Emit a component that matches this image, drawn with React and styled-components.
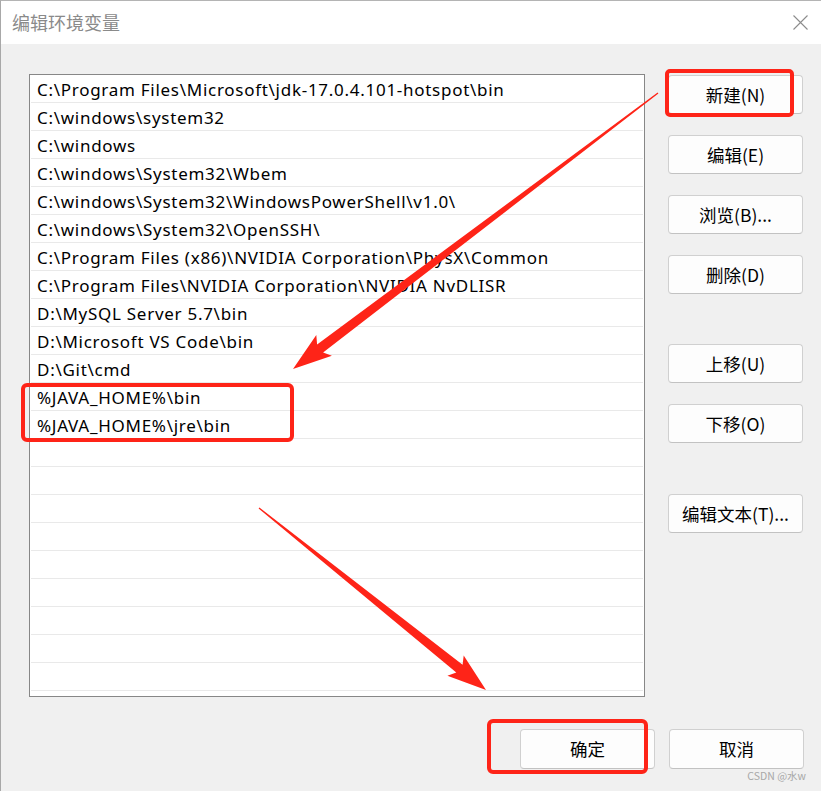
import React from 'react'
import styled, { createGlobalStyle } from 'styled-components'

const GlobalStyle = createGlobalStyle`
  html, body {
    margin: 0;
    padding: 0;
    background: #f0f0f0;
  }
`

const paths = [
  'C:\\Program Files\\Microsoft\\jdk-17.0.4.101-hotspot\\bin',
  'C:\\windows\\system32',
  'C:\\windows',
  'C:\\windows\\System32\\Wbem',
  'C:\\windows\\System32\\WindowsPowerShell\\v1.0\\',
  'C:\\windows\\System32\\OpenSSH\\',
  'C:\\Program Files (x86)\\NVIDIA Corporation\\PhysX\\Common',
  'C:\\Program Files\\NVIDIA Corporation\\NVIDIA NvDLISR',
  'D:\\MySQL Server 5.7\\bin',
  'D:\\Microsoft VS Code\\bin',
  'D:\\Git\\cmd',
  '%JAVA_HOME%\\bin',
  '%JAVA_HOME%\\jre\\bin',
]

const TOTAL_ROWS = 22

const sideButtons = [
  { label: '新建(N)', space: 1 },
  { label: '编辑(E)', space: 21 },
  { label: '浏览(B)...', space: 21 },
  { label: '删除(D)', space: 21 },
  { label: '上移(U)', space: 50 },
  { label: '下移(O)', space: 21 },
  { label: '编辑文本(T)...', space: 51 },
]

const Window = styled.div`
  position: relative;
  width: 821px;
  height: 791px;
  box-sizing: border-box;
  display: flex;
  flex-direction: column;
  background: #f0f0f0;
  border-top: 1px solid #b4b4b4;
  border-left: 1px solid #a8a8a8;
  overflow: hidden;
  font-family: "Noto Sans", "Noto Sans CJK SC", sans-serif;
`

const TitleBar = styled.div`
  height: 43px;
  flex: none;
  display: flex;
  align-items: center;
  justify-content: space-between;
  padding: 0 12px 0 11px;
  background: #ffffff;
`

const Title = styled.span`
  font-family: "Noto Sans CJK SC", sans-serif;
  font-size: 18px;
  color: #8a8a8a;
  padding-bottom: 2px;
`

const CloseIcon = styled.svg`
  width: 15px;
  height: 15px;
  margin-right: 1px;
`

const Body = styled.div`
  display: flex;
  gap: 23px;
  padding: 30px 0 0 28px;
`

const ListBox = styled.div`
  width: 616px;
  height: 623px;
  box-sizing: border-box;
  flex: none;
  border: 1px solid #878787;
  background: #ffffff;
  overflow: hidden;
`

const Row = styled.div`
  height: 28px;
  box-sizing: border-box;
  margin: 0 1px;
  padding: 2px 0 0 6px;
  display: flex;
  align-items: center;
  border-bottom: 1px solid #e9e9e9;
  font-size: 17px;
  letter-spacing: 0.72px;
  color: #000;
  white-space: nowrap;
`

const ButtonColumn = styled.div`
  display: flex;
  flex-direction: column;
`

const Button = styled.button`
  width: 135px;
  height: ${p => p.$tall ? 40 : 39}px;
  margin-top: ${p => p.$space || 0}px;
  box-sizing: border-box;
  border: 1px solid #d0d0d0;
  border-bottom-color: #c2c2c2;
  border-radius: 4px;
  background: #fdfdfd;
  font-family: "Noto Sans CJK SC", sans-serif;
  font-size: 17.5px;
  color: #000;
  padding: 0 0 1px;
  cursor: default;
`

const Footer = styled.div`
  display: flex;
  justify-content: flex-end;
  gap: 14px;
  padding: 32px 17px 0 0;
`

const Overlay = styled.svg`
  position: absolute;
  inset: 0;
  pointer-events: none;
`

const Watermark = styled.span`
  position: absolute;
  right: 15px;
  bottom: 8px;
  font-family: "Noto Sans CJK SC", sans-serif;
  font-size: 10.5px;
  color: #a8a8a8;
`

function arrowPoints(x1, y1, x2, y2) {
  const len = Math.hypot(x2 - x1, y2 - y1)
  const dx = (x2 - x1) / len
  const dy = (y2 - y1) / len
  const nx = -dy
  const ny = dx
  const L = 34
  const bx = x2 - dx * L
  const by = y2 - dy * L
  const bb = (s, w, back = 0) => [bx + nx * w * s - dx * back, by + ny * w * s - dy * back]
  const pts = [
    [x1 + nx * 0.7, y1 + ny * 0.7],
    bb(1, 5),
    bb(1, 13, 5),
    [x2, y2],
    bb(-1, 13, 5),
    bb(-1, 5),
    [x1 - nx * 0.7, y1 - ny * 0.7],
  ]
  return pts.map(p => p.map(v => v.toFixed(1)).join(',')).join(' ')
}

export default function App() {
  const rows = Array.from({ length: TOTAL_ROWS }, (_, i) => paths[i] || '')
  const red = '#fe2418'

  return (
    <Window>
      <GlobalStyle />
      <TitleBar>
        <Title>编辑环境变量</Title>
        <CloseIcon viewBox="0 0 15 15">
          <path d="M0.5 0.5 L14.5 14.5 M14.5 0.5 L0.5 14.5" stroke="#8c8c8c" strokeWidth="1.1" fill="none" />
        </CloseIcon>
      </TitleBar>
      <Body>
        <ListBox>
          {rows.map((text, i) => (
            <Row key={i}>{text}</Row>
          ))}
        </ListBox>
        <ButtonColumn>
          {sideButtons.map(b => (
            <Button key={b.label} $space={b.space}>{b.label}</Button>
          ))}
        </ButtonColumn>
      </Body>
      <Footer>
        <Button $tall>确定</Button>
        <Button $tall>取消</Button>
      </Footer>

      <Overlay width="821" height="791" viewBox="0 0 821 791">
        <g fill="none" stroke={red} strokeWidth="4">
          <rect x="666" y="70" width="125" height="44" rx="3" />
          <rect x="22" y="384" width="269" height="55" rx="4" />
          <rect x="488" y="720" width="157" height="51" rx="4" />
        </g>
        <polygon points={arrowPoints(657, 92, 292, 368)} fill={red} />
        <polygon points={arrowPoints(258, 507, 485, 689)} fill={red} />
      </Overlay>
      <Watermark>CSDN @水w</Watermark>
    </Window>
  )
}
